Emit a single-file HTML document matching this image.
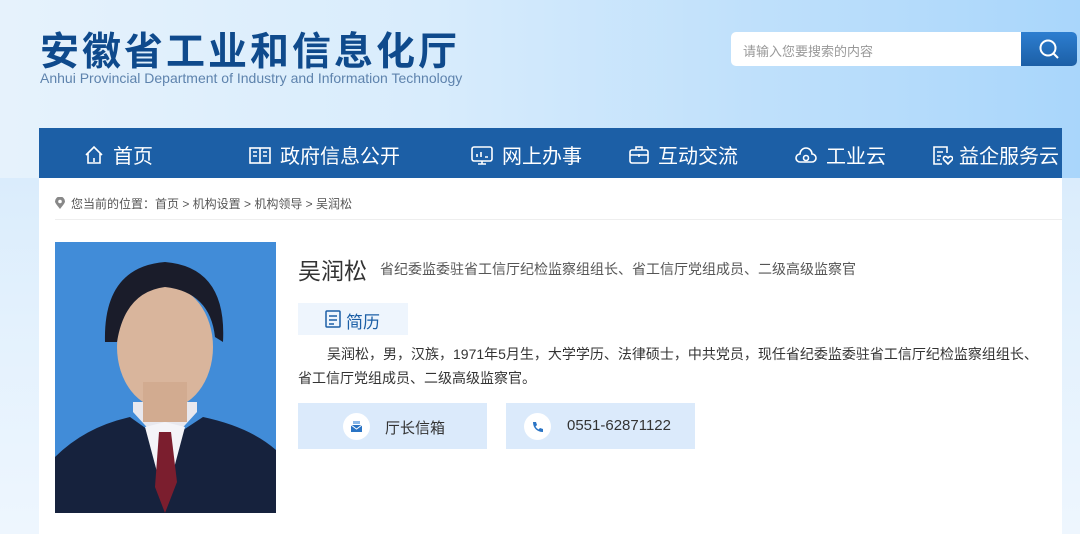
<!DOCTYPE html>
<html><head><meta charset="utf-8"><style>
*{margin:0;padding:0;box-sizing:border-box}
body{width:1080px;height:534px;overflow:hidden;font-family:"Liberation Sans","Noto Sans CJK SC",sans-serif;background:linear-gradient(180deg,#cfe6fb 0%,#e3f1fd 60%,#eef6fe 100%);position:relative}
.hdr{position:absolute;left:0;top:0;width:1080px;height:178px;background:linear-gradient(90deg,#e6f2fc 0%,#d8ecfc 40%,#bfe0fb 70%,#a9d6fb 100%)}
.title{position:absolute;left:40px;top:21px;font-size:39px;font-weight:bold;color:#0f4a8c;letter-spacing:3px;font-family:"Noto Sans CJK SC",sans-serif;white-space:nowrap}
.sub{position:absolute;left:40px;top:70px;font-size:14px;color:#5e83ad;white-space:nowrap}
.search{position:absolute;left:731px;top:32px;width:346px;height:34px;background:#fff;border-radius:5px;overflow:hidden}
.search span{position:absolute;left:12px;top:9px;font-size:13px;color:#999}
.search .btn{position:absolute;right:0;top:0;width:56px;height:34px;background:linear-gradient(#2d7ed0,#1c5fa6)}
.nav{position:absolute;left:39px;top:128px;width:1023px;height:50px;background:#1c5fa6;color:#fff;font-size:20px}
.nav div{position:absolute;top:12px;display:flex;align-items:center;gap:8px;font-family:"Noto Sans CJK SC",sans-serif;white-space:nowrap}
.main{position:absolute;left:39px;top:178px;width:1023px;height:356px;background:#fff}
.bc{position:absolute;left:16px;top:17px;font-size:12px;color:#555}
.line{position:absolute;left:16px;right:0;top:41px;height:1px;background:#eee}
.name{position:absolute;left:259px;top:74px;font-size:23px;color:#333}
.post{position:absolute;left:341px;top:81px;font-size:14px;color:#555}
.jl{position:absolute;left:259px;top:125px;width:110px;height:32px;background:#eef5fd;color:#1c5fa6;font-size:17px;padding:5px 0 0 48px}
.p{position:absolute;left:259px;top:164px;width:760px;font-size:14px;color:#333;line-height:24px;text-indent:29px}
.b{position:absolute;top:225px;width:189px;height:46px;background:#dbeafb;font-size:15px;color:#333}
.b .c{position:absolute;left:45px;top:10px;width:27px;height:27px;border-radius:50%;background:#fff}
.b span{position:absolute;left:87px;top:14px;white-space:nowrap}
</style></head><body>
<div class="hdr"></div>
<div class="title">安徽省工业和信息化厅</div>
<div class="sub">Anhui Provincial Department of Industry and Information Technology</div>
<div class="search"><span>请输入您要搜索的内容</span><div class="btn"><svg width="56" height="34"><circle cx="27" cy="16" r="7.5" fill="none" stroke="#fff" stroke-width="2"/><path d="M32 21l5 5" stroke="#fff" stroke-width="2"/></svg></div></div>
<div class="nav">
<div style="left:44px"><svg width="22" height="22" fill="none" stroke="#fff" stroke-width="1.6"><path d="M3 11L11 3l8 8M5 9v10h12V9M11 14v4"/></svg>首页</div>
<div style="left:209px"><svg width="24" height="22" fill="none" stroke="#fff" stroke-width="1.6"><rect x="2" y="4" width="20" height="15"/><path d="M12 4v15M5 8h4M5 12h4M15 8h4M15 12h4"/></svg>政府信息公开</div>
<div style="left:431px"><svg width="24" height="22" fill="none" stroke="#fff" stroke-width="1.6"><rect x="2" y="3" width="20" height="14" rx="2"/><path d="M8 20h8M12 17v3M7 13V10M11 13V8M15 13h3"/></svg>网上办事</div>
<div style="left:589px"><svg width="22" height="22" fill="none" stroke="#fff" stroke-width="1.6"><rect x="2" y="6" width="18" height="13" rx="2"/><path d="M8 6V3h6v3M2 11h18M11 10v3"/></svg>互动交流</div>
<div style="left:755px"><svg width="24" height="22" fill="none" stroke="#fff" stroke-width="1.6"><path d="M6 18a4 4 0 010-8 6 6 0 0112 0 4 4 0 010 8z"/><circle cx="12" cy="14" r="2.5"/></svg>工业云</div>
<div style="left:892px;gap:6px"><svg width="22" height="22" fill="none" stroke="#fff" stroke-width="1.6"><path d="M16 9V3H3v17h8M6 8h6M6 12h4M6 16h3"/><path d="M17 20l-4-4a2 2 0 013-3l1 1 1-1a2 2 0 013 3z"/></svg>益企服务云</div>
</div>
<div class="main">
<div class="bc"><svg width="10" height="12" style="vertical-align:-1px;margin-right:6px"><path d="M5 12C1 7 0 5.5 0 4.5a5 5 0 0110 0C10 5.5 9 7 5 12z" fill="#888"/><circle cx="5" cy="4.5" r="1.8" fill="#fff"/></svg>您当前的位置：首页 &gt; 机构设置 &gt; 机构领导 &gt; 吴润松</div>
<div class="line"></div>
<svg style="position:absolute;left:16px;top:64px" width="221" height="271">
<rect width="221" height="271" fill="#418cd8"/>
<path d="M0 215 Q30 185 75 175 L110 200 L148 175 Q195 185 221 208 V271 H0z" fill="#16223d"/>
<path d="M78 170 L110 205 L142 170 L142 160 L78 160z" fill="#e8e8ee"/>
<path d="M90 185 L110 260 L130 185 L110 180z" fill="#f4f4f8"/>
<path d="M104 190 L116 190 L122 240 L110 271 L100 245z" fill="#7b1e2e"/>
<ellipse cx="110" cy="105" rx="48" ry="62" fill="#d9b59c"/>
<rect x="88" y="140" width="44" height="40" fill="#d2ab90"/>
<path d="M50 100 Q48 25 110 20 Q172 25 168 100 L160 95 Q155 50 110 45 Q70 50 62 100z" fill="#1a1c2a"/>
</svg>
<div class="name">吴润松</div>
<div class="post">省纪委监委驻省工信厅纪检监察组组长、省工信厅党组成员、二级高级监察官</div>
<div class="jl"><svg width="18" height="18" style="position:absolute;left:26px;top:7px" fill="none" stroke="#1c5fa6" stroke-width="1.5"><rect x="2" y="1" width="14" height="16" rx="1"/><path d="M5 6h8M5 10h8M5 14h5"/></svg>简历</div>
<div class="p">吴润松，男，汉族，1971年5月生，大学学历、法律硕士，中共党员，现任省纪委监委驻省工信厅纪检监察组组长、<br>省工信厅党组成员、二级高级监察官。</div>
<div class="b" style="left:259px"><div class="c"><svg width="27" height="27"><path d="M8 12h11v7H8z" fill="#2b74c4"/><path d="M8 12l5.5 4 5.5-4" fill="none" stroke="#fff"/><rect x="10" y="8" width="7" height="3" fill="#8bb8e8"/></svg></div><span>厅长信箱</span></div>
<div class="b" style="left:467px"><div class="c" style="left:18px"><svg width="27" height="27"><path d="M9 9l3 0 1 3-1.5 1.5a7 7 0 003 3L16 15l3 1v3c-6 0-10-4-10-10z" fill="#2b74c4"/></svg></div><span style="left:61px">0551-62871122</span></div>
</div>
</body></html>
